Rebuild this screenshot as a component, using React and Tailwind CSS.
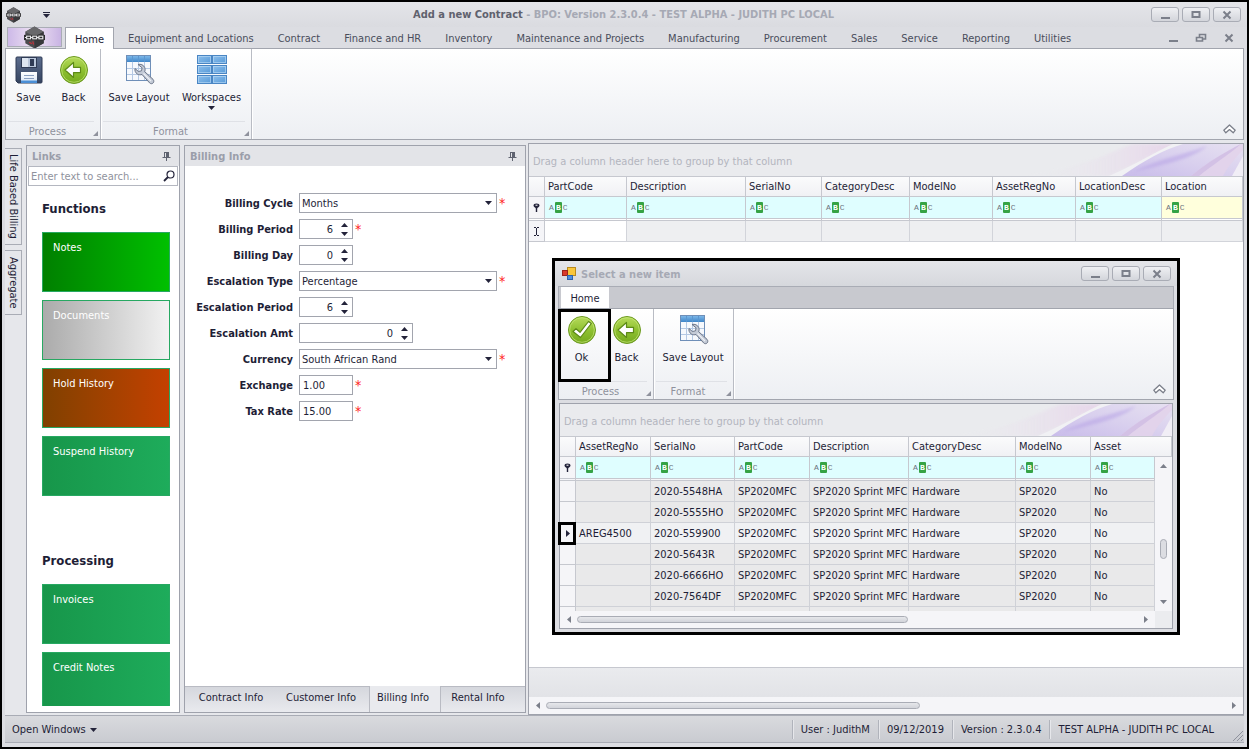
import React from "react";

/* ---------- small drawings ---------- */

function HexLogo({ className }) {
  return (
    <svg viewBox="0 0 24 26" className={className} aria-hidden="true">
      <polygon points="12,0.5 22.5,6.5 22.5,19.5 12,25.5 1.5,19.5 1.5,6.5" fill="#4b4b4e" />
      <polygon points="12,0.5 22.5,6.5 12,12 1.5,6.5" fill="#68686b" />
      <polygon points="12,12 22.5,6.5 22.5,19.5 12,25.5" fill="#38383b" />
      <rect x="0" y="10" width="24" height="6" fill="#2c2c2e" />
      <g fill="none" stroke="#e8e8ea" strokeWidth="1.3">
        <path d="M1 13h2M7.500 13h2.500M14.500 13h2.500" />
        <rect x="3" y="11.5" width="4.5" height="3" />
        <rect x="10" y="11.5" width="4.5" height="3" />
        <rect x="17" y="11.5" width="4.5" height="3" />
      </g>
      <path d="M6 18.500l3 1.600M10 17.500l1 3.500" stroke="#c0303a" strokeWidth="1.4" />
    </svg>
  );
}

function SaveIcon() {
  return (
    <svg viewBox="0 0 32 32" className="size-8" aria-hidden="true">
      <defs>
        <linearGradient id="sv" x1="0" y1="0" x2="0" y2="1">
          <stop offset="0" stopColor="#5c6d8e" />
          <stop offset="1" stopColor="#34435f" />
        </linearGradient>
        <linearGradient id="svl" x1="0" y1="0" x2="0" y2="1">
          <stop offset="0" stopColor="#ffffff" />
          <stop offset="1" stopColor="#d7e4f5" />
        </linearGradient>
      </defs>
      <path d="M4 3h24q1 0 1 1v24q0 1-1 1H5l-2-2V4q0-1 1-1z" fill="url(#sv)" stroke="#2e3a55" />
      <rect x="8" y="3" width="16" height="11" fill="#2f3b55" />
      <rect x="9" y="4" width="14" height="9" fill="#b9c6da" />
      <rect x="9" y="4" width="6" height="9" fill="#dde5f0" />
      <rect x="17" y="5" width="4" height="7" fill="#2f3b55" />
      <rect x="8" y="18" width="16" height="11" fill="url(#svl)" />
      <path d="M11 21.5h10M11 24.5h10" stroke="#8a9fc0" />
      <rect x="8" y="26.5" width="16" height="2.5" fill="#4b8fd6" />
    </svg>
  );
}

function GreenDisc({ id, children }) {
  return (
    <svg viewBox="0 0 32 32" className="size-8" aria-hidden="true">
      <defs>
        <linearGradient id={id} x1="0" y1="0" x2="0" y2="1">
          <stop offset="0" stopColor="#b7db5c" />
          <stop offset="0.5" stopColor="#8fc131" />
          <stop offset="1" stopColor="#74a91d" />
        </linearGradient>
      </defs>
      <circle cx="16" cy="16" r="13.5" fill={`url(#${id})`} stroke="#6c9a20" />
      <circle cx="16" cy="16" r="12.3" fill="none" stroke="#c6e67c" strokeOpacity="0.7" />
      {children}
    </svg>
  );
}

function BackIcon({ id }) {
  return (
    <GreenDisc id={id}>
      <path d="M7 16l8.500-7.500v4.800H22.500v5.400h-7v4.800z" fill="#fff" stroke="#5d8a17" strokeWidth="1.2" strokeLinejoin="round" />
    </GreenDisc>
  );
}

function OkIcon() {
  return (
    <GreenDisc id="okd">
      <path d="M7 17.500l3-2.800 4 3.600L22.500 7.500l2.800 2L14.500 23.500z" fill="#fff" stroke="#5d8a17" strokeWidth="1.2" strokeLinejoin="round" />
    </GreenDisc>
  );
}

function SaveLayoutIcon({ id }) {
  return (
    <svg viewBox="0 0 32 32" className="size-8" aria-hidden="true">
      <defs>
        <linearGradient id={id} x1="0" y1="0" x2="0" y2="1">
          <stop offset="0" stopColor="#7db7e8" />
          <stop offset="1" stopColor="#3f86c9" />
        </linearGradient>
      </defs>
      <rect x="3.500" y="1.500" width="24" height="25" fill="#f6f9fd" stroke="#6f8fb8" />
      <rect x="4" y="2" width="23" height="6" fill={`url(#${id})`} />
      <path d="M4 14.500h23M4 20.500h23M9.500 8v18M15.500 8v18M21.500 8v18" stroke="#b5c9e4" />
      <path d="M9.500 2v6M15.500 2v6M21.500 2v6" stroke="#5b97d0" />
      <path
        d="M15 10.500c2.600-.8 5.600.4 6.700 3 .6 1.500.5 3 0 4.200l8.300 7.600c1.200 1.300.9 2.900.1 3.700-.9.900-2.500 1-3.500-.1l-7.600-8.400c-1.500.5-3.300.4-4.700-.5-2-1.300-2.700-3.500-2.300-5.500l3.400 3 3.100-.7.600-3z"
        fill="#c3cad6"
        stroke="#6b7588"
        strokeLinejoin="round"
      />
      <path d="M20.500 19.500l7.500 7.500" stroke="#eef1f6" strokeWidth="1.200" />
    </svg>
  );
}

function WorkspacesIcon() {
  return (
    <svg viewBox="0 0 32 32" className="size-8" aria-hidden="true">
      <defs>
        <linearGradient id="ws" x1="0" y1="0" x2="1" y2="1">
          <stop offset="0" stopColor="#8fc0ec" />
          <stop offset="1" stopColor="#5599d8" />
        </linearGradient>
      </defs>
      {[1.5, 11.5, 21.5].map((y) =>
        [1.5, 16.5].map((x) => (
          <g key={`${x}-${y}`}>
            <rect x={x} y={y} width="14" height="8" fill="url(#ws)" stroke="#4a86c4" />
            <rect x={x + 1} y={y + 1} width="12" height="6" fill="none" stroke="#bcdcf6" strokeOpacity="0.6" />
          </g>
        ))
      )}
    </svg>
  );
}

function Tri({ dir = "down", className = "text-[#23233a]" }) {
  const pts = {
    down: "0,0 7,0 3.5,4",
    up: "0,4 7,4 3.5,0",
  };
  const side = { left: "4,0 4,7 0,3.5", right: "0,0 0,7 4,3.5" };
  return pts[dir] ? (
    <svg viewBox="0 0 7 4" className={`h-1 w-[7px] ${className}`} aria-hidden="true">
      <polygon points={pts[dir]} fill="currentColor" />
    </svg>
  ) : (
    <svg viewBox="0 0 4 7" className={`h-[7px] w-1 ${className}`} aria-hidden="true">
      <polygon points={side[dir]} fill="currentColor" />
    </svg>
  );
}

function Glyph({ name }) {
  return (
    <svg viewBox="0 0 12 10" className="h-[10px] w-3" fill="none" stroke="#7b7f8a" strokeWidth="2" aria-hidden="true">
      {name === "min" && <path d="M2 8h9" />}
      {name === "max" && <path d="M2.500 2h7v5h-7z" />}
      {name === "close" && <path d="M2.500 1.500l7 7M9.500 1.500l-7 7" />}
      {name === "restore" && <path d="M4.500 4V1.500h6V6H8M1.500 4.500h6V8h-6z" strokeWidth="1.600" />}
    </svg>
  );
}

function Pin() {
  return (
    <svg viewBox="0 0 9 9" className="size-[9px]" aria-hidden="true">
      <path d="M2 0.500h5M2.500 0v5M0.500 5.500h8M4.500 6v3" stroke="#5f6370" fill="none" />
      <rect x="4" y="0" width="3" height="6" fill="#5f6370" />
    </svg>
  );
}

function Chevron() {
  return (
    <svg viewBox="0 0 13 10" className="h-[10px] w-[13px]" fill="#fff" stroke="#7b7f8a" strokeWidth="1.300" aria-hidden="true">
      <path d="M0.800 6.200L6.500 1l5.700 5.200-2 2.600-3.700-3.200-3.700 3.200z" strokeLinejoin="round" />
    </svg>
  );
}

function Swirl({ id }) {
  return (
    <svg viewBox="0 0 240 32" preserveAspectRatio="none" className="h-full w-60" aria-hidden="true">
      <defs>
        <linearGradient id={`${id}a`} x1="0" y1="0" x2="1" y2="0">
          <stop offset="0" stopColor="#ebecef" stopOpacity="0" />
          <stop offset="1" stopColor="#e6cfe9" />
        </linearGradient>
        <linearGradient id={`${id}b`} x1="0" y1="1" x2="1" y2="0">
          <stop offset="0" stopColor="#c9bcea" />
          <stop offset="0.500" stopColor="#d9d0ee" />
          <stop offset="1" stopColor="#e6e0f1" />
        </linearGradient>
        <filter id={`${id}f`}>
          <feGaussianBlur stdDeviation="1.500" />
        </filter>
      </defs>
      <path d="M20 32C80 26 110 6 130 0H174C154 8 134 20 106 32z" fill={`url(#${id}a)`} filter={`url(#${id}f)`} opacity="0.800" />
      <path d="M106 32C134 20 152 8 170 0H192C165 8 146 18 122 32z" fill="#f1f1f4" />
      <path d="M119 32C142 16 160 6 180 0H240V32z" fill={`url(#${id}b)`} />
      <path d="M130 28C158 14 176 12 204 2C190 14 166 20 130 28z" fill="#b9a6e6" opacity="0.600" filter={`url(#${id}f)`} />
      <path d="M188 32C205 18 222 8 238 0H240V6C232 14 224 24 220 32z" fill="#e2d3ea" opacity="0.900" />
      <path d="M188 32C205 18 222 8 238 0C224 12 208 22 196 32z" fill="#cdb9e2" opacity="0.700" />
      <path d="M229 32L240 12V32z" fill="#f1eef6" />
    </svg>
  );
}

function Abc() {
  return (
    <span className="flex h-[11px] items-center gap-px font-['Liberation_Mono',monospace] text-[8px] leading-[11px] text-[#6d7480]">
      <span>A</span>
      <span className="w-[7px] rounded-[1px] bg-[#35a345] text-center font-bold text-white">B</span>
      <span>C</span>
    </span>
  );
}

function FilterMark() {
  return (
    <svg viewBox="0 0 7 9" className="mx-auto h-[9px] w-[7px]" aria-hidden="true">
      <path d="M0.500 2.500a3 2 0 0 1 6 0c0 1.500-2 2-2.300 3V9H2.800V5.500C2.500 4.500.5 4 .5 2.500z" fill="#23233a" />
      <rect x="2.500" y="1.700" width="2" height="1" fill="#fff" />
    </svg>
  );
}

/* ---------- window pieces ---------- */

function WindowButtons() {
  return (
    <div className="flex gap-[3px]">
      {[
        ["min", "Minimize"],
        ["max", "Maximize"],
        ["close", "Close"],
      ].map(([g, label]) => (
        <button
          key={g}
          aria-label={label}
          className="flex h-[15px] w-7 items-center justify-center rounded-[3px] border border-[#a9acb5] bg-linear-to-b from-[#eff0f3] to-[#d3d5db]"
        >
          <Glyph name={g} />
        </button>
      ))}
    </div>
  );
}

function RibbonButton({ icon, label, width, arrow }) {
  return (
    <button className={`flex flex-col items-center pt-[5px] ${width}`}>
      {icon}
      <span className="mt-1 leading-4 whitespace-nowrap">{label}</span>
      {arrow && <Tri />}
    </button>
  );
}

function RibbonGroup({ title, pad, children }) {
  return (
    <section className="flex flex-col border-r border-[#b9bcc4] shadow-[1px_0_0_#fff]">
      <div className={`flex flex-1 ${pad}`}>{children}</div>
      <div className="mr-[6px] ml-[2px] flex h-[18px] items-center justify-center border-t border-[#dfe1e6] pt-[2px] text-[#8f929d]">
        <span className="flex-1 pr-[6px] text-center">{title}</span>
        <svg viewBox="0 0 5 5" className="-mr-1 mt-1 size-[5px]" aria-hidden="true">
          <path d="M5 0v5H0z" fill="#8f929d" />
        </svg>
      </div>
    </section>
  );
}

function Ribbon({ children }) {
  return (
    <div className="relative flex h-[92px] shrink-0 border border-[#a2a5ae] bg-linear-to-b from-white to-[#edeff3]">
      {children}
      <button aria-label="Collapse ribbon" className="mt-auto mr-[7px] mb-[5px] ml-auto">
        <Chevron />
      </button>
    </div>
  );
}

function GroupPanel({ id }) {
  return (
    <div className="flex h-8 shrink-0 items-center justify-between bg-[#eaebee] pl-1 text-[#b3b5be]">
      <span className="pt-[3px]">Drag a column header here to group by that column</span>
      <Swirl id={id} />
    </div>
  );
}

const thCls =
  "h-[21px] border-t border-r border-b border-[#c6c8cf] bg-linear-to-b from-[#fbfbfc] to-[#f0f1f4] px-[3px] text-left font-normal whitespace-nowrap";

function HScroll({ thumb }) {
  return (
    <div className="flex h-[17px] shrink-0 items-center gap-[6px] bg-[#f5f5f8] px-[7px]" aria-hidden="true">
      <Tri dir="left" className="text-[#7b7f8a]" />
      <div className="flex-1">
        <div className={`h-[7px] rounded-full border border-[#a9acb5] bg-linear-to-b from-[#e6e7eb] to-[#d2d4da] ${thumb}`} />
      </div>
      <Tri dir="right" className="text-[#7b7f8a]" />
    </div>
  );
}

/* ---------- data ---------- */

const TABS = [
  "Equipment and Locations",
  "Contract",
  "Finance and HR",
  "Inventory",
  "Maintenance and Projects",
  "Manufacturing",
  "Procurement",
  "Sales",
  "Service",
  "Reporting",
  "Utilities",
];

const MAIN_COLS = [
  ["PartCode", "w-[82px]"],
  ["Description", "w-[119px]"],
  ["SerialNo", "w-[76px]"],
  ["CategoryDesc", "w-[88px]"],
  ["ModelNo", "w-[83px]"],
  ["AssetRegNo", "w-[83px]"],
  ["LocationDesc", "w-[86px]"],
  ["Location", ""],
];

const ITEM_COLS = [
  ["AssetRegNo", "w-[75px]"],
  ["SerialNo", "w-[84px]"],
  ["PartCode", "w-[75px]"],
  ["Description", "w-[99px]"],
  ["CategoryDesc", "w-[107px]"],
  ["ModelNo", "w-[75px]"],
  ["Asset", ""],
];

const ITEMS = [
  ["", "2020-5548HA"],
  ["", "2020-5555HO"],
  ["AREG4500", "2020-559900"],
  ["", "2020-5643R"],
  ["", "2020-6666HO"],
  ["", "2020-7564DF"],
];

const GREEN = "from-[#17964a] to-[#1eac5b]";

/* ---------- panels ---------- */

function PanelHeader({ title }) {
  return (
    <header className="flex h-5 shrink-0 items-center justify-between bg-[#e3e4e8] pt-px pr-2 pl-[5px] font-bold text-[#9b9eaa]">
      <h2>{title}</h2>
      <button aria-label={`Pin ${title}`}>
        <Pin />
      </button>
    </header>
  );
}

function Tile({ label, color }) {
  return (
    <button className={`flex h-[60px] w-full shrink-0 items-start border border-[#27a862] bg-linear-to-r px-[10px] pt-[7px] text-white ${color}`}>
      {label}
    </button>
  );
}

function Links() {
  return (
    <aside className="flex w-[154px] shrink-0 flex-col border border-[#9fa2ac] bg-white">
      <PanelHeader title="Links" />
      <div className="mx-px flex h-5 shrink-0 items-center border border-[#b4b7c0] bg-white pr-[2px]">
        <input
          aria-label="Search links"
          placeholder="Enter text to search..."
          className="min-w-0 flex-1 pt-px pl-[2px] outline-none placeholder:text-[#8f929d]"
        />
        <svg viewBox="0 0 12 12" className="size-3" fill="none" stroke="#23233a" aria-hidden="true">
          <circle cx="7.500" cy="4.500" r="3.500" strokeWidth="1.200" />
          <path d="M5 7L1 11" strokeWidth="1.800" />
        </svg>
      </div>
      <div className="mb-[6px] flex min-h-0 flex-1 flex-col overflow-hidden pr-[9px] pl-[15px]">
        <h3 className="mt-[13px] mb-[13px] text-[13px] leading-5 font-bold">Functions</h3>
        <div className="flex flex-col gap-2">
          <Tile label="Notes" color="from-[#008000] to-[#00c000]" />
          <Tile label="Documents" color="from-[#ababab] to-[#f2f2f2]" />
          <Tile label="Hold History" color="from-[#804000] to-[#c44000]" />
          <Tile label="Suspend History" color={GREEN} />
        </div>
        <h3 className="mt-[55px] mb-[13px] text-[13px] leading-5 font-bold">Processing</h3>
        <div className="flex flex-col gap-2">
          <Tile label="Invoices" color={GREEN} />
          <Tile label="Credit Notes" color={GREEN} />
        </div>
      </div>
    </aside>
  );
}

function Field({ id, label, required, children }) {
  return (
    <div className="flex h-5 items-center">
      <label htmlFor={id} className="w-[108px] shrink-0 pt-[2px] pr-[6px] text-right font-bold whitespace-nowrap">
        {label}
      </label>
      {children}
      {required && <span className="ml-[2px] text-[14px] leading-5 text-[#ff2020]">*</span>}
    </div>
  );
}

const boxCls = "h-5 border border-[#a2a5ae] bg-white";

function Pick({ id, value }) {
  return (
    <span className={`relative flex w-[198px] items-center ${boxCls}`}>
      <select id={id} className="size-full appearance-none pt-[2px] pl-[2px] outline-none">
        <option>{value}</option>
      </select>
      <span className="pointer-events-none absolute right-1">
        <Tri />
      </span>
    </span>
  );
}

function Spin({ id, value, width }) {
  return (
    <span className={`flex items-center pr-1 ${width} ${boxCls}`}>
      <input id={id} defaultValue={value} className="min-w-0 flex-1 pt-px pr-2 text-right outline-none" />
      <span className="flex flex-col gap-[5px]">
        <button aria-label="Increase">
          <Tri dir="up" />
        </button>
        <button aria-label="Decrease">
          <Tri />
        </button>
      </span>
    </span>
  );
}

function Plain({ id, value }) {
  return <input id={id} defaultValue={value} className={`w-[54px] px-[3px] outline-none ${boxCls}`} />;
}

function BillingInfo() {
  return (
    <section className="flex w-[342px] shrink-0 flex-col border border-[#9fa2ac] bg-white">
      <PanelHeader title="Billing Info" />
      <form className="flex flex-1 flex-col gap-[6px] pt-[27px] pl-[6px]">
        <Field id="cycle" label="Billing Cycle" required>
          <Pick id="cycle" value="Months" />
        </Field>
        <Field id="period" label="Billing Period" required>
          <Spin id="period" value="6" width="w-[54px]" />
        </Field>
        <Field id="day" label="Billing Day">
          <Spin id="day" value="0" width="w-[54px]" />
        </Field>
        <Field id="etype" label="Escalation Type" required>
          <Pick id="etype" value="Percentage" />
        </Field>
        <Field id="eperiod" label="Escalation Period">
          <Spin id="eperiod" value="6" width="w-[54px]" />
        </Field>
        <Field id="eamt" label="Escalation Amt">
          <Spin id="eamt" value="0" width="w-[114px]" />
        </Field>
        <Field id="currency" label="Currency" required>
          <Pick id="currency" value="South African Rand" />
        </Field>
        <Field id="exchange" label="Exchange" required>
          <Plain id="exchange" value="1.00" />
        </Field>
        <Field id="tax" label="Tax Rate" required>
          <Plain id="tax" value="15.00" />
        </Field>
      </form>
      <nav className="flex h-[26px] shrink-0 bg-[#e9eaee] leading-[14px]">
        <div className="flex border-t border-r border-[#b9bbc3] bg-linear-to-b from-[#d5d7dd] to-[#e9eaee] pb-[3px]">
          <button className="w-[92px]">Contract Info</button>
          <button className="w-[92px] pr-1">Customer Info</button>
        </div>
        <button className="w-[70px] pr-1 pb-[2px]">Billing Info</button>
        <div className="flex-1 border-t border-l border-[#b9bbc3] bg-linear-to-b from-[#d5d7dd] to-[#e9eaee] pb-[3px]">
          <button className="h-full w-[74px]">Rental Info</button>
        </div>
      </nav>
    </section>
  );
}

const filterCls = "h-[24px] border-r border-b-[3px] border-[#c6c8cf] [border-bottom-style:double] bg-clip-padding";

function MainGrid() {
  return (
    <section className="flex min-w-0 flex-1 flex-col overflow-hidden border border-[#9fa2ac] bg-white">
      <GroupPanel id="m" />
      <table className="w-full table-fixed border-separate border-spacing-0">
        <thead>
          <tr>
            <th className={`w-4 ${thCls}`} aria-label="Row state" />
            {MAIN_COLS.map(([c, w]) => (
              <th key={c} className={`${w} ${thCls}`}>
                {c}
              </th>
            ))}
          </tr>
        </thead>
        <tbody>
          <tr>
            <td className={`bg-[#f5f5f8] ${filterCls}`}>
              <FilterMark />
            </td>
            {MAIN_COLS.map(([c]) => (
              <td key={c} className={`pl-1 ${filterCls} ${c === "Location" ? "bg-[#ffffdc]" : "bg-[#dffeff]"}`}>
                <Abc />
              </td>
            ))}
          </tr>
          <tr>
            <td className="h-[21px] border-r border-b border-[#c6c8cf] bg-[#f5f5f8]">
              <svg viewBox="0 0 7 9" className="mx-auto h-[9px] w-[7px]" fill="none" stroke="#23233a" aria-hidden="true">
                <path d="M1 .5h2M4 .5h2M1 8.500h2M4 8.500h2M3.500 1v7" />
              </svg>
            </td>
            {MAIN_COLS.map(([c], i) => (
              <td key={c} className={`border-r border-b border-[#d2d4da] ${i === 0 ? "bg-white" : "bg-[#eeeff1]"}`} />
            ))}
          </tr>
        </tbody>
      </table>
      <div className="flex-1" />
      <div className="h-[30px] shrink-0 border-t border-[#c6c8cf] bg-linear-to-b from-[#eaebee] to-[#e2e3e7]" />
      <HScroll thumb="w-[55%]" />
    </section>
  );
}

function ItemGrid() {
  return (
    <section className="mx-px mt-[3px] flex flex-1 flex-col overflow-hidden border border-[#9fa2ac] bg-[#f5f5f8]">
      <GroupPanel id="d" />
      <div className="h-[175px] overflow-hidden">
        <table className="w-full table-fixed border-separate border-spacing-0">
          <colgroup>
            <col className="w-4" />
            {ITEM_COLS.map(([c, w]) => (
              <col key={c} className={w} />
            ))}
            <col className="w-[17px]" />
          </colgroup>
          <thead>
            <tr>
              <th className={thCls} aria-label="Row state" />
              {ITEM_COLS.map(([c]) => (
                <th key={c} className={thCls} colSpan={c === "Asset" ? 2 : 1}>
                  {c}
                </th>
              ))}
            </tr>
          </thead>
          <tbody>
            <tr>
              <td className={`bg-[#f5f5f8] ${filterCls}`}>
                <FilterMark />
              </td>
              {ITEM_COLS.map(([c]) => (
                <td key={c} className={`bg-[#dffeff] pl-1 ${filterCls}`}>
                  <Abc />
                </td>
              ))}
              <td rowSpan={ITEMS.length + 2} className="bg-[#f5f5f8] align-top">
                <div className="flex h-[154px] flex-col items-center py-[7px]">
                  <Tri dir="up" className="text-[#7b7f8a]" />
                  <div className="mt-[71px] h-5 w-[7px] rounded-full border border-[#a9acb5] bg-[#dcdde2]" />
                  <Tri className="mt-auto text-[#7b7f8a]" />
                </div>
              </td>
            </tr>
            {ITEMS.map(([reg, serial]) => {
              const current = reg !== "";
              const cell = `h-[21px] overflow-hidden border-r border-b border-[#cfd1d7] pt-px pl-[3px] whitespace-nowrap ${
                current ? "bg-[#f0f1f3]" : "bg-[#e9e9ea]"
              }`;
              return (
                <tr key={serial}>
                  <td className="h-[21px] border-r border-b border-[#c6c8cf] bg-[#f5f5f8]">
                    {current && (
                      <span className="flex justify-center">
                        <Tri dir="right" />
                      </span>
                    )}
                  </td>
                  <td className={cell}>{reg}</td>
                  <td className={cell}>{serial}</td>
                  <td className={cell}>SP2020MFC</td>
                  <td className={cell}>SP2020 Sprint MFC</td>
                  <td className={cell}>Hardware</td>
                  <td className={cell}>SP2020</td>
                  <td className={cell}>No</td>
                </tr>
              );
            })}
            <tr>
              <td className="h-[21px] border-r border-[#c6c8cf] bg-[#f5f5f8]" />
              {ITEM_COLS.map(([c]) => (
                <td key={c} className="border-r border-[#cfd1d7] bg-[#e9e9ea]" />
              ))}
            </tr>
          </tbody>
        </table>
      </div>
      <div className="flex flex-1 bg-[#ebecef]">
        <div className="flex-1 bg-[#f5f5f8]">
          <HScroll thumb="w-[59%]" />
        </div>
        <div className="w-[17px]" />
      </div>
    </section>
  );
}

function Dialog() {
  return (
    <div
      role="dialog"
      aria-label="Select a new item"
      className="absolute top-[118px] left-6 flex h-[377px] w-[628px] flex-col border-[3px] border-black bg-[#dcdde2] px-[3px] pb-[3px]"
    >
      <header className="-mx-[3px] flex h-[25px] shrink-0 items-center bg-linear-to-b from-[#e4e5e9] to-[#d6d8dd] pr-[6px] pl-[7px]">
        <svg viewBox="0 0 14 14" className="mr-[5px] size-[14px]" aria-hidden="true">
          <rect x="5.500" y="0.500" width="8" height="8" fill="#f9c63b" stroke="#b98a1c" />
          <rect x="0.500" y="3.500" width="5" height="5" fill="#d93a2b" stroke="#9c241a" />
          <rect x="5.500" y="8.500" width="5" height="4" fill="#4d8fe0" stroke="#2d62ab" />
        </svg>
        <h2 className="flex-1 pt-[2px] font-bold text-[#a6a9b4]">Select a new item</h2>
        <WindowButtons />
      </header>
      <div className="flex h-[22px] shrink-0 border-x border-t border-[#a9acb5] bg-[#c8c9cf] pl-[2px]">
        <button className="h-full w-12 bg-white pt-[3px]">Home</button>
      </div>
      <Ribbon>
        <RibbonGroup title="Process" pad="pr-1">
          <RibbonButton icon={<OkIcon />} label="Ok" width="w-[45px]" />
          <RibbonButton icon={<BackIcon id="bk2" />} label="Back" width="w-[45px]" />
        </RibbonGroup>
        <RibbonGroup title="Format" pad="pl-[2px] pr-[3px]">
          <RibbonButton icon={<SaveLayoutIcon id="sl2" />} label="Save Layout" width="w-[74px]" />
        </RibbonGroup>
        <span className="pointer-events-none absolute top-0 -left-px h-[73px] w-[53px] border-[3px] border-black" />
      </Ribbon>
      <ItemGrid />
      <span className="pointer-events-none absolute top-[261px] left-[3px] h-[23px] w-[18px] border-[3px] border-black" />
    </div>
  );
}

/* ---------- app ---------- */

export default function App() {
  return (
    <div className="flex h-screen flex-col overflow-hidden border-2 border-black bg-[#dcdde2] px-[3px] font-['DejaVu_Sans_Condensed',Roboto,sans-serif] text-[11px] leading-4 text-[#1e1e36]">
      <header className="-mx-[3px] flex h-[25px] shrink-0 items-center bg-linear-to-b from-[#e4e5e9] to-[#dadbe0] pr-[6px] pl-1">
        <div className="flex w-[90px] items-center gap-[22px]">
          <HexLogo className="h-4 w-[15px]" />
          <button aria-label="Customize quick access" className="flex flex-col items-center gap-px">
            <span className="h-px w-[7px] bg-[#23233a]" />
            <Tri />
          </button>
        </div>
        <h1 className="flex-1 text-center font-bold text-[#a6a9b4]">
          <span className="text-[#5f626e]">Add a new Contract</span> - BPO: Version 2.3.0.4 - TEST ALPHA - JUDITH PC LOCAL
        </h1>
        <WindowButtons />
      </header>

      <nav className="flex h-[21px] shrink-0 items-end pl-[2px]">
        <button
          aria-label="Application menu"
          className="mr-[3px] flex h-5 w-[55px] items-center justify-center self-start border border-[#a9acb5] bg-linear-to-r from-[#cdb9e8] via-[#efe3f2] to-[#c9b4e4]"
        >
          <HexLogo className="h-[23px] w-[21px] shrink-0" />
        </button>
        <button className="relative z-10 mr-[2px] -mb-px h-[22px] w-[49px] border-x border-t border-[#a2a5ae] bg-white pt-[3px]">
          Home
        </button>
        {TABS.map((t) => (
          <button key={t} className="h-full px-3 pt-[3px] whitespace-nowrap text-[#4a4d5c]">
            {t}
          </button>
        ))}
        <span className="ml-auto flex h-full items-center gap-4 pr-[9px]">
          <button aria-label="Minimize document">
            <Glyph name="min" />
          </button>
          <button aria-label="Restore document">
            <Glyph name="restore" />
          </button>
          <button aria-label="Close document">
            <Glyph name="close" />
          </button>
        </span>
      </nav>

      <Ribbon>
        <RibbonGroup title="Process" pad="pr-1">
          <RibbonButton icon={<SaveIcon />} label="Save" width="w-[45px]" />
          <RibbonButton icon={<BackIcon id="bk1" />} label="Back" width="w-[45px]" />
        </RibbonGroup>
        <RibbonGroup title="Format" pad="pl-px pr-1">
          <RibbonButton icon={<SaveLayoutIcon id="sl1" />} label="Save Layout" width="w-[74px]" />
          <RibbonButton icon={<WorkspacesIcon />} label="Workspaces" width="w-[71px]" arrow />
        </RibbonGroup>
      </Ribbon>

      <main className="flex min-h-0 flex-1 bg-[#e6e7eb]">
        <nav className="flex w-[17px] shrink-0 flex-col gap-[5px] pt-2">
          <button className="h-[97px] w-[17px] border border-l-0 border-[#a9acb5] leading-[15px] [writing-mode:vertical-rl]">Life Based Billing</button>
          <button className="h-[65px] w-[17px] border border-l-0 border-[#a9acb5] leading-[15px] [writing-mode:vertical-rl]">Aggregate</button>
        </nav>
        <div className="flex shrink-0 gap-1 pt-[5px] pb-[2px] pl-1">
          <Links />
          <BillingInfo />
        </div>
        <div className="relative ml-[2px] flex min-w-0 flex-1 pt-[3px]">
          <MainGrid />
          <Dialog />
        </div>
      </main>

      <footer className="flex h-7 shrink-0 items-center border-t border-b border-[#a9acb5] bg-linear-to-b from-[#d9dade] to-[#c9cbd1] pl-[7px]">
        <button className="mr-auto flex items-center gap-1 pt-px">
          Open Windows <Tri />
        </button>
        {["User : JudithM", "09/12/2019", "Version : 2.3.0.4", "TEST ALPHA - JUDITH PC LOCAL"].map((s) => (
          <span key={s} className="border-l border-[#b0b3bb] px-2 pt-px leading-[18px] shadow-[inset_1px_0_0_#e6e7eb]">
            {s}
          </span>
        ))}
        <svg viewBox="0 0 12 12" className="mt-auto ml-[10px] size-3" stroke="#8f929d" aria-hidden="true">
          <path d="M1 11L11 1M5 11l6-6M9 11l2-2" />
        </svg>
      </footer>
      <div className="h-1 shrink-0" />
    </div>
  );
}
